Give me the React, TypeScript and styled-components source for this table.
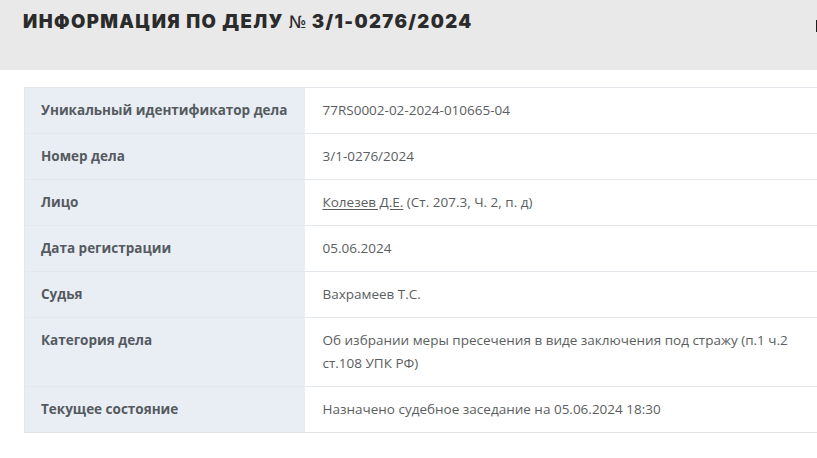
import React from 'react'
import styled, { createGlobalStyle } from 'styled-components'

const GlobalStyle = createGlobalStyle`
  html, body {
    margin: 0;
    padding: 0;
    background: #ffffff;
    overflow: hidden;
  }
  body {
    font-family: 'Open Sans', 'Noto Sans', Arial, sans-serif;
  }
`

const Page = styled.div`
  width: 817px;
  height: 458px;
  overflow: hidden;
`

const Header = styled.header`
  background: #e9e9e9;
  height: 70px;
  box-sizing: border-box;
  padding: 8px 0 0 23px;
  display: flex;
  justify-content: space-between;
  align-items: flex-start;
  width: 830px;
`

const Title = styled.h1`
  margin: 0;
  font-family: Inter, 'Noto Sans', sans-serif;
  font-weight: 900;
  font-size: 18.5px;
  line-height: 26px;
  letter-spacing: 1.4px;
  color: #2b2b2b;
  text-transform: uppercase;
`

const Numero = styled.span`
  font-family: 'DejaVu Sans', sans-serif;
  font-weight: 400;
  font-size: 17px;
  letter-spacing: 0;
`

const HeaderIcon = styled.div`
  margin-top: 8px;
  width: 16px;
  height: 14px;
  color: #1e1e1e;
`

const Content = styled.main`
  padding: 17px 0 0 24px;
`

const Table = styled.table`
  width: 816px;
  border-collapse: collapse;
  border: 1px solid #e4e7eb;
  font-size: 13.5px;
  line-height: 23px;
`

const Row = styled.tr`
  border-bottom: 1px solid #e4e7eb;
  &:last-child {
    border-bottom: 1px solid #dfe3e8;
  }
`

const Label = styled.th`
  width: 280px;
  box-sizing: border-box;
  background: #e9eef4;
  text-align: left;
  vertical-align: top;
  padding: 11px 12px 11px 16px;
  font-weight: 700;
  color: #545a60;
  white-space: nowrap;
`

const Value = styled.td`
  text-align: left;
  vertical-align: top;
  padding: 11px 18px 11px 18px;
  font-weight: 400;
  color: #5b5e61;
`

const PersonLink = styled.a`
  color: #5b5e61;
  text-decoration: underline;
  text-underline-offset: 2px;
`

type CaseRow = { label: string; value: React.ReactNode }

const rows: CaseRow[] = [
  { label: 'Уникальный идентификатор дела', value: '77RS0002-02-2024-010665-04' },
  { label: 'Номер дела', value: '3/1-0276/2024' },
  {
    label: 'Лицо',
    value: (
      <>
        <PersonLink href="#">Колезев Д.Е.</PersonLink> (Ст. 207.3, Ч. 2, п. д)
      </>
    ),
  },
  { label: 'Дата регистрации', value: '05.06.2024' },
  { label: 'Судья', value: 'Вахрамеев Т.С.' },
  {
    label: 'Категория дела',
    value: 'Об избрании меры пресечения в виде заключения под стражу (п.1 ч.2 ст.108 УПК РФ)',
  },
  { label: 'Текущее состояние', value: 'Назначено судебное заседание на 05.06.2024 18:30' },
]

export default function App() {
  return (
    <Page>
      <GlobalStyle />
      <Header>
        <Title>
          Информация по делу <Numero>№</Numero> 3/1-0276/2024
        </Title>
        <HeaderIcon>
          <svg width="16" height="14" viewBox="0 0 16 14">
            <path d="M2 1 L14 1 L14 13 L2 13 Z" fill="currentColor" />
          </svg>
        </HeaderIcon>
      </Header>
      <Content>
        <Table>
          <tbody>
            {rows.map((row) => (
              <Row key={row.label}>
                <Label>{row.label}</Label>
                <Value>{row.value}</Value>
              </Row>
            ))}
          </tbody>
        </Table>
      </Content>
    </Page>
  )
}
